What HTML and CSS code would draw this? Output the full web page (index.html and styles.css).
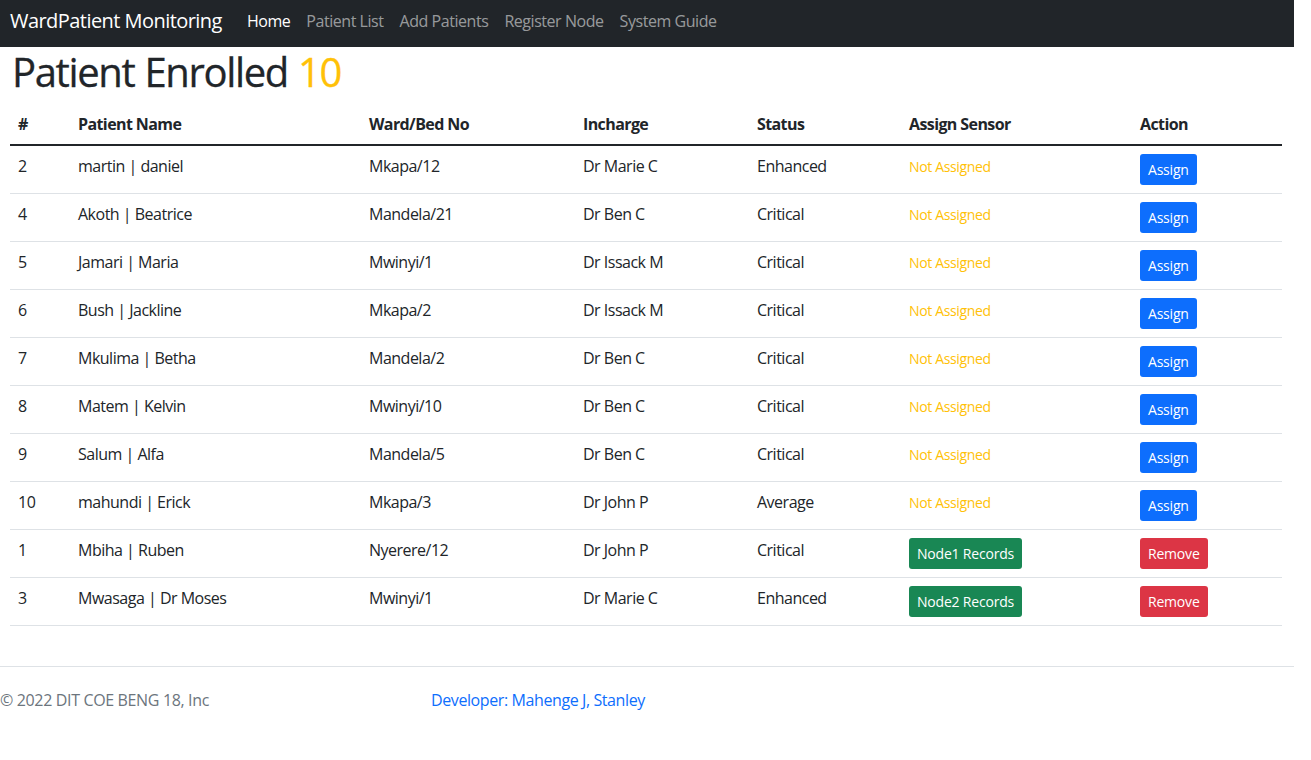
FILE: index.html
```html
<!DOCTYPE html>
<html lang="en">
<head>
<meta charset="utf-8">
<title>WardPatient Monitoring</title>
<link rel="stylesheet" href="styles.css">
</head>
<body>
<div class="page">
  <nav class="navbar">
    <a class="brand" href="#">WardPatient Monitoring</a>
    <ul class="nav">
      <li><a class="nav-link active" href="#">Home</a></li>
      <li><a class="nav-link" href="#">Patient List</a></li>
      <li><a class="nav-link" href="#">Add Patients</a></li>
      <li><a class="nav-link" href="#">Register Node</a></li>
      <li><a class="nav-link" href="#">System Guide</a></li>
    </ul>
  </nav>

  <main class="content">
    <h1 class="title">Patient Enrolled <span class="count">10</span></h1>
    <table class="table">
      <colgroup>
        <col class="c1"><col class="c2"><col class="c3"><col class="c4"><col class="c5"><col class="c6"><col class="c7">
      </colgroup>
      <thead>
        <tr><th>#</th><th>Patient Name</th><th>Ward/Bed No</th><th>Incharge</th><th>Status</th><th>Assign Sensor</th><th>Action</th></tr>
      </thead>
      <tbody>
        <tr><td>2</td><td>martin | daniel</td><td>Mkapa/12</td><td>Dr Marie C</td><td>Enhanced</td><td><span class="na">Not Assigned</span></td><td><a class="btn btn-primary" href="#">Assign</a></td></tr>
        <tr><td>4</td><td>Akoth | Beatrice</td><td>Mandela/21</td><td>Dr Ben C</td><td>Critical</td><td><span class="na">Not Assigned</span></td><td><a class="btn btn-primary" href="#">Assign</a></td></tr>
        <tr><td>5</td><td>Jamari | Maria</td><td>Mwinyi/1</td><td>Dr Issack M</td><td>Critical</td><td><span class="na">Not Assigned</span></td><td><a class="btn btn-primary" href="#">Assign</a></td></tr>
        <tr><td>6</td><td>Bush | Jackline</td><td>Mkapa/2</td><td>Dr Issack M</td><td>Critical</td><td><span class="na">Not Assigned</span></td><td><a class="btn btn-primary" href="#">Assign</a></td></tr>
        <tr><td>7</td><td>Mkulima | Betha</td><td>Mandela/2</td><td>Dr Ben C</td><td>Critical</td><td><span class="na">Not Assigned</span></td><td><a class="btn btn-primary" href="#">Assign</a></td></tr>
        <tr><td>8</td><td>Matem | Kelvin</td><td>Mwinyi/10</td><td>Dr Ben C</td><td>Critical</td><td><span class="na">Not Assigned</span></td><td><a class="btn btn-primary" href="#">Assign</a></td></tr>
        <tr><td>9</td><td>Salum | Alfa</td><td>Mandela/5</td><td>Dr Ben C</td><td>Critical</td><td><span class="na">Not Assigned</span></td><td><a class="btn btn-primary" href="#">Assign</a></td></tr>
        <tr><td>10</td><td>mahundi | Erick</td><td>Mkapa/3</td><td>Dr John P</td><td>Average</td><td><span class="na">Not Assigned</span></td><td><a class="btn btn-primary" href="#">Assign</a></td></tr>
        <tr><td>1</td><td>Mbiha | Ruben</td><td>Nyerere/12</td><td>Dr John P</td><td>Critical</td><td><a class="btn btn-success" href="#">Node1 Records</a></td><td><a class="btn btn-danger" href="#">Remove</a></td></tr>
        <tr><td>3</td><td>Mwasaga | Dr Moses</td><td>Mwinyi/1</td><td>Dr Marie C</td><td>Enhanced</td><td><a class="btn btn-success" href="#">Node2 Records</a></td><td><a class="btn btn-danger" href="#">Remove</a></td></tr>
      </tbody>
    </table>
  </main>

  <footer class="footer">
    <p class="copy">© 2022 DIT COE BENG 18, Inc</p>
    <a class="dev" href="#">Developer: Mahenge J, Stanley</a>
    <div></div>
  </footer>
</div>
</body>
</html>
```

FILE: styles.css
```css
html, body {
  margin: 0;
  padding: 0;
  background: #fff;
}

body {
  font-family: "Open Sans", "Noto Sans", "Liberation Sans", sans-serif;
  font-size: 16px;
  line-height: 1.5;
  color: #212529;
}

a { text-decoration: none; }

.page {
  width: 1294px;
}

.navbar {
  box-sizing: border-box;
  display: flex;
  align-items: center;
  height: 47px;
  background: #212529;
  padding: 0 10px 6px 10px;
}

.brand {
  color: #fff;
  font-size: 20px;
  line-height: 30px;
  margin-right: 17px;
  letter-spacing: -0.55px;
}

.nav {
  display: flex;
  list-style: none;
  margin: 0;
  padding: 0;
}

.nav-link {
  display: block;
  padding: 0 8px;
  color: rgba(255, 255, 255, 0.55);
  line-height: 24px;
  letter-spacing: -0.45px;
}

.nav-link.active { color: #fff; }

.content {
  padding: 0 12px 0 10px;
}

.title {
  margin: 1px 0 8px 2px;
  font-size: 40px;
  font-weight: 500;
  line-height: 48px;
  letter-spacing: -1.35px;
  word-spacing: 1px;
  -webkit-text-stroke: 0.3px #212529;
}

.count {
  color: #ffc107;
  -webkit-text-stroke: 0.3px #ffc107;
}

.table {
  width: 1272px;
  table-layout: fixed;
  border-collapse: collapse;
  margin-bottom: 16px;
}

.c1 { width: 60px; }
.c2 { width: 291px; }
.c3 { width: 214px; }
.c4 { width: 174px; }
.c5 { width: 152px; }
.c6 { width: 231px; }
.c7 { width: 150px; }

.table th, .table td {
  padding: 8px;
  text-align: left;
  vertical-align: top;
  letter-spacing: -0.5px;
}

.table th {
  font-weight: 700;
  border-bottom: 2px solid #212529;
  letter-spacing: -0.6px;
}

.table td {
  border-bottom: 1px solid #dee2e6;
}

.na {
  display: inline-block;
  color: #ffc107;
  font-size: 14px;
  line-height: 21px;
  padding-top: 2px;
  letter-spacing: -0.35px;
}

.btn {
  display: inline-block;
  font-size: 14px;
  line-height: 21px;
  padding: 5px 8px;
  border-radius: 3px;
  color: #fff;
  letter-spacing: -0.2px;
}

.btn-primary { background: #0d6efd; }
.btn-success { background: #198754; }
.btn-danger { background: #dc3545; }

.footer {
  display: grid;
  grid-template-columns: 431px 431px 432px;
  align-items: center;
  margin-top: 40px;
  padding: 16px 0;
  border-top: 1px solid #dee2e6;
  min-height: 34px;
}

.copy {
  margin: 0;
  color: #6c757d;
  letter-spacing: -0.35px;
}

.dev {
  color: #0d6efd;
  letter-spacing: -0.4px;
}
```
